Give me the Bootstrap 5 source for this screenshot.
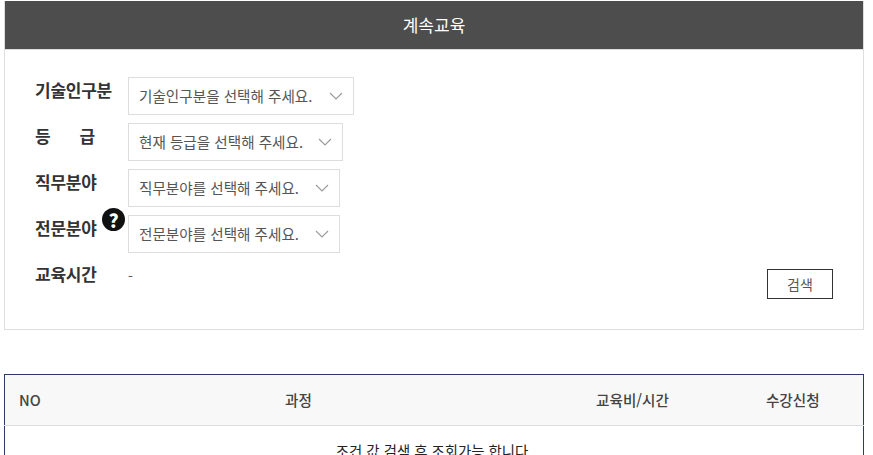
<!DOCTYPE html>
<html lang="ko">
<head>
<meta charset="utf-8">
<title>계속교육</title>
<link href="https://cdn.jsdelivr.net/npm/bootstrap@5.3.0/dist/css/bootstrap.min.css" rel="stylesheet">
<style>
html,body{height:455px;overflow:hidden}
body{font-family:"Noto Sans CJK KR","Noto Sans",sans-serif;font-size:14px;color:#333;background:#fff;padding:0 9px 0 4px}
.edu-panel{border:1px solid #ddd;border-top:0;height:329px}
.edu-head{height:49px;margin:1px 0 0;background:#4d4d4d;color:#fff;font-size:17px;line-height:48px;text-align:center;border-bottom:1px solid #ddd}
.edu-body{padding:27px 30px 0 30px;position:relative}
.edu-row{display:flex;align-items:flex-start;height:38px;margin-bottom:8px}
.edu-label{width:93px;flex:none;font-size:17px;font-weight:700;color:#333;line-height:26px;position:relative;letter-spacing:-.25px}
.edu-spaced{display:flex;justify-content:space-between;width:60px}
.edu-select{appearance:none;height:38px;border:1px solid #ddd;border-radius:0;background:#fff url("data:image/svg+xml,%3Csvg xmlns='http://www.w3.org/2000/svg' width='14' height='8' viewBox='0 0 14 8'%3E%3Cpath d='M1 1l6 6 6-6' fill='none' stroke='%23999' stroke-width='1.1'/%3E%3C/svg%3E") no-repeat right 10px center;color:#555;font-family:inherit;font-size:14.6px;padding:0 26px 0 10px;box-shadow:none}
.edu-w1{width:226px}.edu-w2{width:215px}.edu-w3{width:212px}
.edu-help{position:absolute;left:67px;top:-7px;width:23px;height:23px;border-radius:50%;background:#111;color:#fff;font-size:19px;font-weight:900;line-height:23px;text-align:center;letter-spacing:0}
.edu-value{color:#555;line-height:24px;padding-top:3px}
.edu-btn{position:absolute;right:30px;top:219px;width:66px;height:30px;border:1px solid #333;border-radius:0;background:#fff;color:#555;font-size:14px;line-height:28px;padding:0}
.edu-gap{height:44px}
.edu-grid{width:100%;margin:0;border-top:1px solid #2b3a67;border-left:1px solid #2b3a67;border-right:1px solid #2b3a67;table-layout:fixed}
.edu-grid th{background:#f8f8f8;height:51px;font-weight:500;font-size:14.6px;color:#444;text-align:center;vertical-align:middle;border-bottom:1px solid #ddd;padding:0}
.edu-grid th:first-child{text-align:left;padding-left:14px}
.edu-grid th:last-child{padding-right:10px}
.edu-grid td{text-align:center;color:#222;font-size:14.4px;padding:14px 0;border:0}
</style>
</head>
<body>
<div class="edu-panel bg-white">
  <div class="edu-head">계속교육</div>
  <div class="edu-body">
    <div class="edu-row"><div class="edu-label">기술인구분</div>
      <select class="edu-select edu-w1"><option>기술인구분을 선택해 주세요.</option></select></div>
    <div class="edu-row"><div class="edu-label"><span class="edu-spaced"><span>등</span><span>급</span></span></div>
      <select class="edu-select edu-w2"><option>현재 등급을 선택해 주세요.</option></select></div>
    <div class="edu-row"><div class="edu-label">직무분야</div>
      <select class="edu-select edu-w3"><option>직무분야를 선택해 주세요.</option></select></div>
    <div class="edu-row"><div class="edu-label">전문분야<span class="edu-help">?</span></div>
      <select class="edu-select edu-w3"><option>전문분야를 선택해 주세요.</option></select></div>
    <div class="edu-row"><div class="edu-label">교육시간</div><div class="edu-value">-</div></div>
    <button type="button" class="btn edu-btn">검색</button>
  </div>
</div>
<div class="edu-gap"></div>
<table class="edu-grid">
  <colgroup><col style="width:60px"><col style="width:468px"><col style="width:200px"><col></colgroup>
  <thead><tr><th>NO</th><th>과정</th><th>교육비/시간</th><th>수강신청</th></tr></thead>
  <tbody><tr><td colspan="4">조건 값 검색 후 조회가능 합니다.</td></tr></tbody>
</table>
</body>
</html>
